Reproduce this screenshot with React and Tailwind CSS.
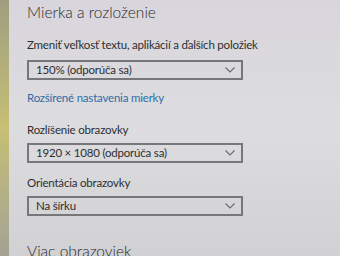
function Chevron() {
  return (
    <svg width="10" height="6" viewBox="0 0 10 6" className="shrink-0">
      <path d="M0.5 0.5 L5 5 L9.5 0.5" fill="none" stroke="#6b6b6e" strokeWidth="1.1" />
    </svg>
  )
}

function Select({ value, className = '' }) {
  return (
    <div
      className={`w-[216px] border-2 border-[#77777a] flex items-center justify-between pl-[7px] pr-[6px] ${className}`}
    >
      <span className="text-[11.5px] tracking-[-0.2px] leading-[16px] text-[#2e2e30]">{value}</span>
      <Chevron />
    </div>
  )
}

export default function App() {
  return (
    <div className="w-[340px] h-[256px] flex overflow-hidden font-[Lato,sans-serif]">
      <div className="w-[9px] shrink-0 bg-linear-to-b from-[#9f9e80] via-[#c6bf74] to-[#a3a294]" />
      <div className="flex-1 bg-linear-to-b from-[#d8d6dc] via-[#dddcdf] to-[#d1d1d3] pl-[18px] flex flex-col">
        <h1 className="pt-[2px] text-[15.5px] leading-[20px] font-light text-[#2a2a2c]">
          Mierka a rozloženie
        </h1>
        <p className="mt-[15px] text-[11.5px] tracking-[-0.2px] leading-[16px] text-[#2e2e30]">
          Zmeniť veľkosť textu, aplikácií a ďalších položiek
        </p>
        <Select value="150% (odporúča sa)" className="mt-[7px] h-[23px]" />
        <a className="mt-[10px] text-[11.5px] tracking-[-0.2px] leading-[16px] text-[#2f6da6]">
          Rozšírené nastavenia mierky
        </a>
        <p className="mt-[16px] text-[11.5px] tracking-[-0.2px] leading-[16px] text-[#2e2e30]">
          Rozlíšenie obrazovky
        </p>
        <Select value="1920 × 1080 (odporúča sa)" className="mt-[5px] h-[24px]" />
        <p className="mt-[12px] text-[11.5px] tracking-[-0.2px] leading-[16px] text-[#2e2e30]">
          Orientácia obrazovky
        </p>
        <Select value="Na šírku" className="mt-[5px] h-[24px]" />
        <h2 className="mt-[25px] text-[15.5px] leading-[20px] font-light text-[#2a2a2c]">
          Viac obrazoviek
        </h2>
      </div>
    </div>
  )
}
